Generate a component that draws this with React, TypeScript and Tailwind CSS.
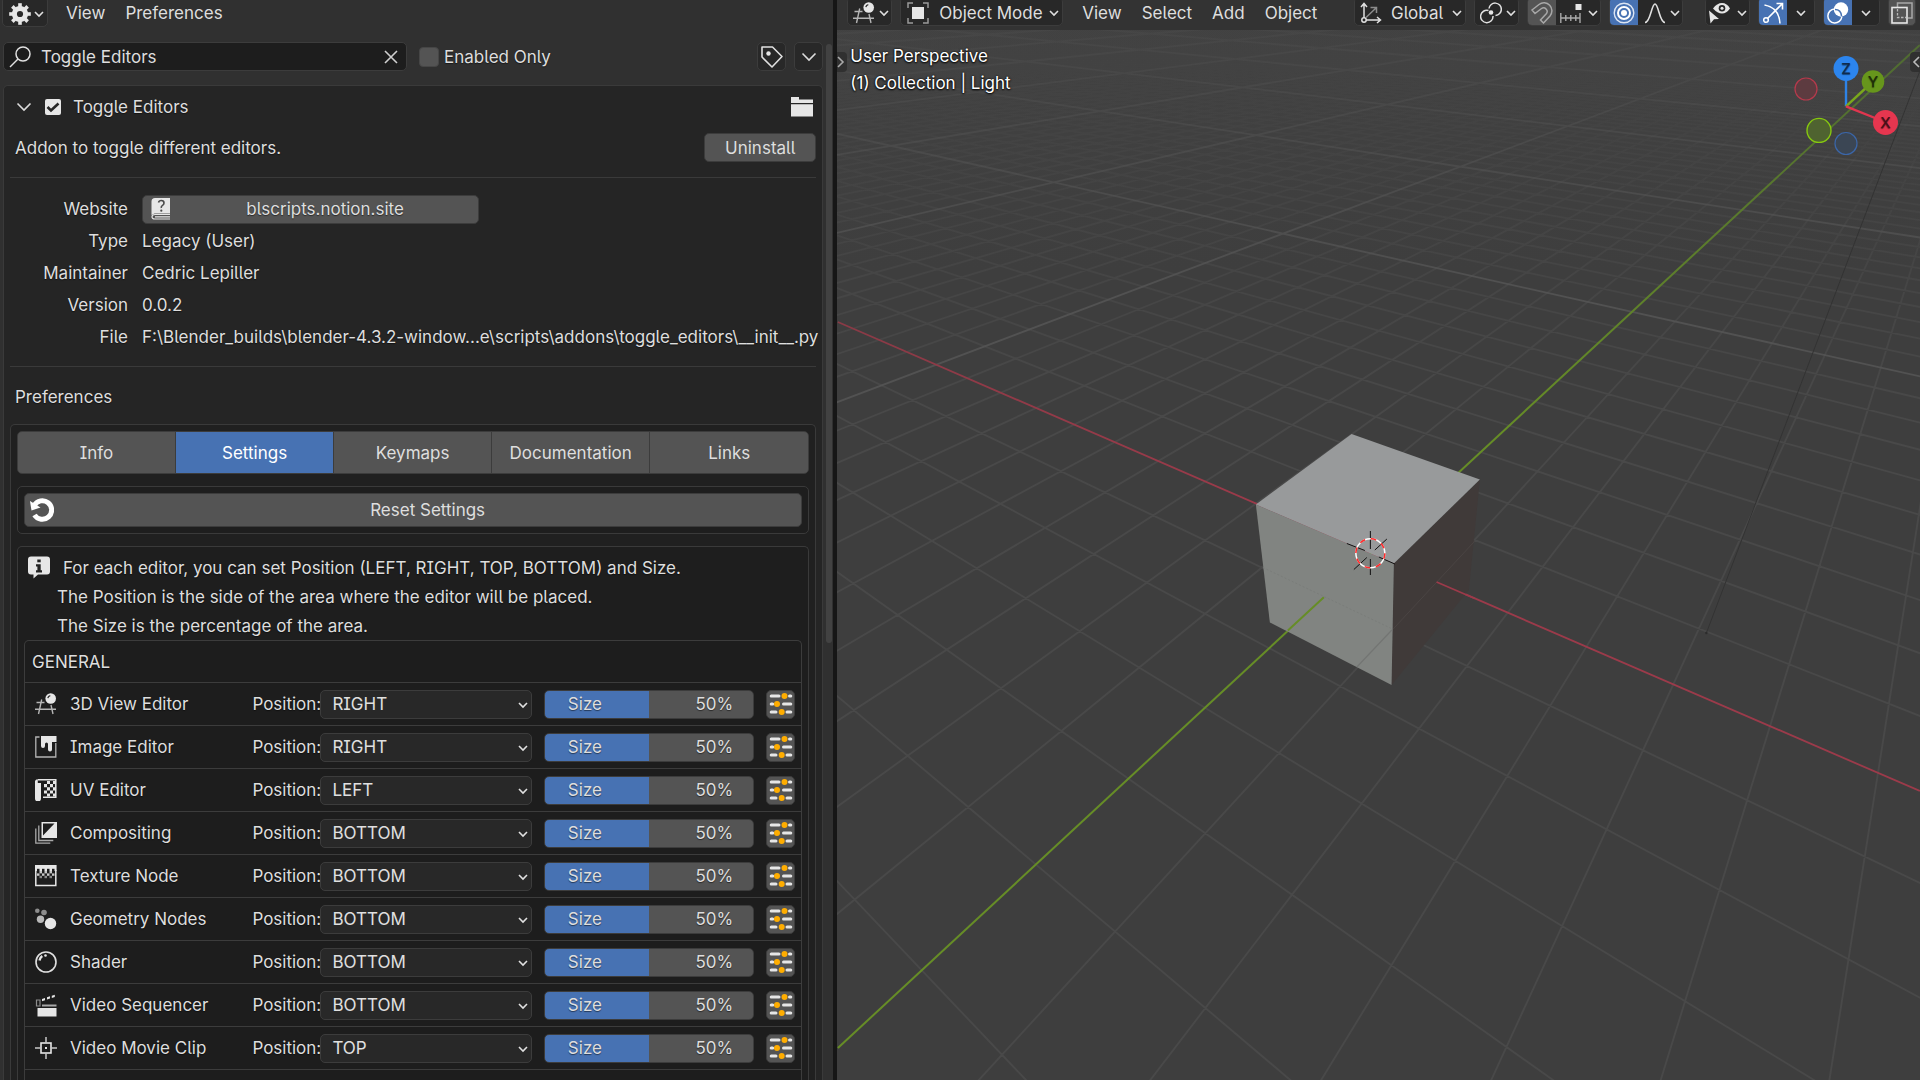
import React, { useState } from "react";

type IconProps = { className?: string };

function Svg({ children, className = "" }: { children: React.ReactNode; className?: string }) {
  return (
    <svg viewBox="0 0 22 22" className={`h-[22px] w-[22px] shrink-0 ${className}`} fill="none" aria-hidden="true">
      {children}
    </svg>
  );
}

function Chevron({ className = "" }: IconProps) {
  return (
    <svg viewBox="0 0 10 8" className={`h-2 w-2.5 shrink-0 ${className}`} fill="none" aria-hidden="true">
      <path d="M1 2l4 4 4-4" stroke="#e0e0e0" strokeWidth="1.6" />
    </svg>
  );
}

function WideChevron() {
  return (
    <svg viewBox="0 0 16 10" className="h-2.5 w-4 shrink-0" fill="none" aria-hidden="true">
      <path d="M1.500 1.500l6.500 6.500 6.500-6.500" stroke="#dcdcdc" strokeWidth="1.600" />
    </svg>
  );
}

function GearIcon() {
  return (
    <Svg>
      <circle cx="11" cy="11" r="5.600" stroke="#e6e6e6" strokeWidth="5" />
      {[0, 45, 90, 135, 180, 225, 270, 315].map((a) => (
        <rect key={a} x="9.200" y="0.200" width="3.600" height="4" fill="#e6e6e6" transform={`rotate(${a} 11 11)`} />
      ))}
    </Svg>
  );
}

function SearchIcon() {
  return (
    <Svg>
      <circle cx="14" cy="8" r="7" stroke="#e0e0e0" strokeWidth="1.500" />
      <path d="M9 13L1 21" stroke="#e0e0e0" strokeWidth="1.500" />
    </Svg>
  );
}

function TagIcon() {
  return (
    <Svg>
      <path d="M1 1h10.500l9.500 9.500L11 21 1 11z" stroke="#e0e0e0" strokeWidth="1.600" strokeLinejoin="round" />
      <circle cx="7.500" cy="7.500" r="2.200" fill="#e6e6e6" />
    </Svg>
  );
}

function FolderIcon() {
  return (
    <Svg>
      <path d="M0 1h8v2.500h14V7H0zM0 8.200h22V20.500H0z" fill="#e6e6e6" />
    </Svg>
  );
}

function BookIcon() {
  return (
    <Svg>
      <path d="M5 0h15v15.500H4.500L1.500 17V3.500Q1.500 0 5 0z" fill="#e6e6e6" />
      <path d="M20 16.500H5q-3 0-3 2.300T5 21h15M5 18.800h15" stroke="#e6e6e6" strokeWidth="1.200" />
      <path d="M8.500 4.500Q9 2.500 11.300 2.500 14 2.500 14 5q0 1.500-1.500 2.400T11.300 10" stroke="#4a4a4a" strokeWidth="1.600" />
      <circle cx="11.300" cy="12.700" r="1.100" fill="#4a4a4a" />
    </Svg>
  );
}

function ResetIcon() {
  return (
    <svg viewBox="0 0 24 24" className="h-6 w-6 shrink-0" fill="none" aria-hidden="true">
      <path d="M4.200 7.500A9.300 9.300 0 1 1 4.500 17" stroke="#fff" strokeWidth="5" />
      <path d="M0 3l1.500 9.500 9-3z" fill="#fff" />
    </svg>
  );
}

function InfoIcon() {
  return (
    <Svg className="h-[23px]">
      <path d="M3 0h16a3 3 0 0 1 3 3v12a3 3 0 0 1-3 3H10l-4.500 4V18H3a3 3 0 0 1-3-3V3a3 3 0 0 1 3-3z" fill="#e6e6e6" />
      <rect x="9.300" y="3" width="3.400" height="2.800" fill="#222" />
      <path d="M8 7.700h4.700v6.100H14V16H8v-2.200h1.400V9.900H8z" fill="#222" />
    </Svg>
  );
}

function View3DIcon() {
  return (
    <Svg>
      <g stroke="#b4b4b4" strokeWidth="1.400">
        <path d="M1.500 9.500h8M0 16.300h21M6.700 6.500L3.500 21M16 12l2 9" />
      </g>
      <circle cx="15.700" cy="5.500" r="5.300" fill="#e6e6e6" />
      <path d="M12.800 5.200q.4-2.200 2.500-2.600" stroke="#333" strokeWidth="1.300" />
    </Svg>
  );
}

function ImageIcon() {
  return (
    <Svg>
      <path d="M4.500 1H.8v20h20V7" stroke="#b4b4b4" strokeWidth="1.300" />
      <path d="M6 0h15.500v6H17v7.500a2 2 0 0 1-4 0V8a1.500 1.500 0 0 0-3 0v2a1.800 1.800 0 0 1-4 0z" fill="#e6e6e6" />
    </Svg>
  );
}

function UvIcon() {
  return (
    <Svg>
      <path d="M3 .8h17.800v17.500H8" stroke="#e6e6e6" strokeWidth="1.500" />
      <path d="M0 3a2.500 2.500 0 0 1 2.800-2.800V4H6v15.500a2.500 2.500 0 0 1-6 0z" fill="#e6e6e6" />
      <path d="M12 2h3v3h-3zM18 2h3v3h-3zM15 5h3v3.200h-3zM9 5h3v3.200H9zM12 8.200h3v3.200h-3zM18 8.200h3v3.200h-3zM15 11.400h3v3.200h-3zM9 11.400h3v3.200H9zM12 14.600h3v3h-3zM18 14.600h3v3h-3z" fill="#e6e6e6" />
    </Svg>
  );
}

function CompositingIcon() {
  return (
    <Svg>
      <path d="M6.500 0H22v16H6.500z" fill="#e6e6e6" />
      <path d="M8 1.500h11.500L8 13.500z" fill="#1d1d1d" />
      <path d="M3.800 3.500v15h14.500M.8 6.500v14.700h14.500" stroke="#a8a8a8" strokeWidth="1.300" />
    </Svg>
  );
}

function TextureIcon() {
  return (
    <Svg>
      <path d="M.8 5v15.500h20V5" stroke="#e6e6e6" strokeWidth="1.500" />
      <path d="M0 0h21.600v6H0z" fill="#e6e6e6" />
      <g fill="#1d1d1d">
        {[2, 7, 12, 17].map((x) => (
          <rect key={x} x={x} y="3.800" width="2.500" height="2.400" />
        ))}
      </g>
      <g fill="#c8c8c8">
        {[4.5, 9.5, 14.5].map((x) => (
          <rect key={x} x={x} y="6" width="2.500" height="2.400" />
        ))}
        {[2, 7, 12, 17].map((x) => (
          <rect key={x} x={x} y="8.400" width="2.500" height="2.400" />
        ))}
        {[4.5, 9.5, 14.5].map((x) => (
          <rect key={x} x={x} y="10.800" width="2.500" height="2.400" fill="#888" />
        ))}
      </g>
    </Svg>
  );
}

function GeometryIcon() {
  return (
    <Svg>
      <circle cx="2.300" cy="2.700" r="2.300" fill="#8c8c8c" />
      <circle cx="9" cy="4.500" r="2.800" fill="#8c8c8c" />
      <circle cx="5.500" cy="11.300" r="3.700" fill="#b8b8b8" />
      <circle cx="15.500" cy="15.500" r="5.700" fill="#e6e6e6" />
    </Svg>
  );
}

function ShaderIcon() {
  return (
    <Svg>
      <circle cx="11" cy="11" r="10" stroke="#e0e0e0" strokeWidth="1.600" />
      <path d="M4.500 9.500Q5 6.500 7.300 5" stroke="#e6e6e6" strokeWidth="2.400" />
      <circle cx="10.500" cy="4.500" r="1.300" fill="#e6e6e6" />
    </Svg>
  );
}

function SequencerIcon() {
  return (
    <Svg className="h-[23px]">
      <path d="M2.500 13.500h19V22h-19z" fill="#e6e6e6" />
      <path d="M7 11h14.500" stroke="#a8a8a8" strokeWidth="2" />
      <path d="M1.500 5.500H5v6H1.500z" stroke="#8c8c8c" strokeWidth="1.200" />
      <path d="M7 4.500l3-1v2.300l-3 1zM12 2.800l3-1V4l-3 1zM16.800 1.200l3-1v2.300l-3 1z" fill="#e6e6e6" />
    </Svg>
  );
}

function ClipIcon() {
  return (
    <Svg>
      <rect x="6" y="6" width="10" height="10" stroke="#e6e6e6" strokeWidth="1.600" />
      <path d="M11 0v6M11 16v6M0 11h6M16 11h6" stroke="#c8c8c8" strokeWidth="1.500" />
      <rect x="10" y="10" width="2" height="2" fill="#e6e6e6" />
    </Svg>
  );
}

function SlidersIcon() {
  return (
    <svg viewBox="0 0 24 22" className="h-[22px] w-6" fill="none" aria-hidden="true">
      <g stroke="#e6e6e6" strokeWidth="3" strokeLinecap="round">
        <path d="M2.200 3H10M20.500 3h1.300M2.200 11h1.500M14.500 11h7.300M2.200 19H7M18 19h3.800" />
      </g>
      <g fill="#ffad00">
        <circle cx="15.500" cy="3" r="3" />
        <circle cx="8" cy="11" r="3" />
        <circle cx="12.700" cy="19" r="3" />
      </g>
    </svg>
  );
}

function ObjectModeIcon() {
  return (
    <Svg>
      <path d="M1 6V1h5M16 1h5v5M21 16v5h-5M6 21H1v-5" stroke="#9a9a9a" strokeWidth="1.500" />
      <rect x="5" y="5" width="12" height="12" fill="#e6e6e6" />
    </Svg>
  );
}

function OrientationIcon() {
  return (
    <Svg>
      <path d="M4 16V2M1 5l3-3.500L7 5M6 18h14M17 15l3.500 3-3.500 3" stroke="#e0e0e0" strokeWidth="1.500" />
      <circle cx="4" cy="18" r="2.200" stroke="#e0e0e0" strokeWidth="1.500" />
      <path d="M6 15.500L16 6M10.500 5.500H16.500V11" stroke="#8c8c8c" strokeWidth="1.500" />
    </Svg>
  );
}

function PivotIcon() {
  return (
    <Svg>
      <path d="M9 6.500A6.200 6.200 0 1 1 15.500 13.500M8.500 8.500A6.200 6.200 0 1 0 13 14" stroke="#e0e0e0" strokeWidth="1.500" />
      <circle cx="11" cy="10.500" r="2.300" fill="#e6e6e6" />
    </Svg>
  );
}

function MagnetIcon() {
  return (
    <Svg>
      <path d="M1 8l7-5.500a8 8 0 0 1 11 11.500L12.500 21l-3-3 6-6.500a3.600 3.600 0 0 0-5-5L4 11.500z" stroke="#a8a8a8" strokeWidth="1.500" />
    </Svg>
  );
}

function IncrementIcon() {
  return (
    <Svg>
      <path d="M.8 11v10M5.800 13v6M10.800 13v6M15.800 13v6M20 11v10M.8 16H20" stroke="#a8a8a8" strokeWidth="1.400" />
      <rect x="15.500" y="2" width="6" height="6" fill="#e6e6e6" />
    </Svg>
  );
}

function ProportionalIcon() {
  return (
    <Svg>
      <circle cx="11" cy="11" r="3" fill="#fff" />
      <circle cx="11" cy="11" r="6" stroke="#fff" strokeWidth="2" />
      <circle cx="11" cy="11" r="9.800" stroke="#dbe4f2" strokeWidth="1.400" />
    </Svg>
  );
}

function FalloffIcon() {
  return (
    <Svg>
      <path d="M1 20.500C6.500 20.500 7.500 2 11 2s4.500 18.500 10 18.500" stroke="#e0e0e0" strokeWidth="1.600" />
    </Svg>
  );
}

function VisibilityIcon() {
  return (
    <Svg>
      <path d="M5 6.500Q9 1 14 1t8 5.500Q18.500 11.500 14 11.500T5 6.500z" fill="#e6e6e6" />
      <circle cx="14" cy="6.300" r="3.300" fill="#282828" />
      <circle cx="14" cy="6.300" r="1.500" fill="#e6e6e6" />
      <path d="M1 8.500l10 8.500-5 .3L2.500 21.500z" fill="#e6e6e6" />
    </Svg>
  );
}

function GizmoIcon() {
  return (
    <Svg>
      <path d="M2.500 3Q17 5.500 18 21.500M5.500 16.500L20 2M14.500 1.500H20.500V7.500" stroke="#fff" strokeWidth="1.600" />
      <circle cx="4" cy="18" r="2.300" stroke="#fff" strokeWidth="1.500" />
    </Svg>
  );
}

function OverlayIcon() {
  return (
    <Svg>
      <circle cx="14" cy="7.500" r="7.200" fill="#fff" />
      <path d="M7.500 7A7 7 0 1 0 14.800 15" stroke="#fff" strokeWidth="1.500" />
      <path d="M8 7.500Q14 7.500 14.500 14" stroke="#4772b3" strokeWidth="1.500" />
    </Svg>
  );
}

function XrayIcon() {
  return (
    <Svg>
      <path d="M6.500 5V1H21v15h-4" stroke="#a8a8a8" strokeWidth="1.500" />
      <rect x="1" y="5.500" width="15" height="15.500" stroke="#e6e6e6" strokeWidth="1.600" />
      <path d="M6.500 7v8.500H15" stroke="#b8b8b8" strokeWidth="1.300" strokeDasharray="2.500 1.500" />
    </Svg>
  );
}

type Editor = { name: string; position: string; icon: () => React.ReactElement };

const EDITORS: Editor[] = [
  { name: "3D View Editor", position: "RIGHT", icon: View3DIcon },
  { name: "Image Editor", position: "RIGHT", icon: ImageIcon },
  { name: "UV Editor", position: "LEFT", icon: UvIcon },
  { name: "Compositing", position: "BOTTOM", icon: CompositingIcon },
  { name: "Texture Node", position: "BOTTOM", icon: TextureIcon },
  { name: "Geometry Nodes", position: "BOTTOM", icon: GeometryIcon },
  { name: "Shader", position: "BOTTOM", icon: ShaderIcon },
  { name: "Video Sequencer", position: "BOTTOM", icon: SequencerIcon },
  { name: "Video Movie Clip", position: "TOP", icon: ClipIcon },
];

function EditorRow({ editor }: { editor: Editor }) {
  const Icon = editor.icon;
  const id = editor.name.toLowerCase().replace(/ /g, "-");
  const [size, setSize] = useState(50);
  return (
    <div className="grid h-[43px] grid-cols-[217fr_279fr_222fr_41px] items-center border-t border-[#3c3c3c] pr-1.5 pl-2.5">
      <div className="flex items-center gap-[13px]">
        <Icon />
        <span>{editor.name}</span>
      </div>
      <div className="flex items-center">
        <label htmlFor={`${id}-pos`} className="w-[68px] shrink-0">
          Position:
        </label>
        <div className="relative flex-1">
          <select
            id={`${id}-pos`}
            defaultValue={editor.position}
            className="block h-[29px] w-full appearance-none rounded-[5px] border border-[#3c3c3c] bg-[#282828] pl-[11px] text-[#e0e0e0]"
          >
            {["LEFT", "RIGHT", "TOP", "BOTTOM"].map((p) => (
              <option key={p}>{p}</option>
            ))}
          </select>
          <Chevron className="pointer-events-none absolute top-[11px] right-1" />
        </div>
      </div>
      <div className="relative ml-3">
        <input
          id={`${id}-size`}
          type="range"
          value={size}
          onChange={(e) => setSize(Number(e.target.value))}
          style={{ backgroundImage: `linear-gradient(to right, #4772b3 ${size}%, #545454 ${size}%)` }}
          className="block h-[29px] w-full appearance-none rounded-[5px] border border-[#3c3c3c] [&::-webkit-slider-thumb]:h-0 [&::-webkit-slider-thumb]:w-0 [&::-webkit-slider-thumb]:appearance-none"
        />
        <div className="pointer-events-none absolute inset-0 flex items-center justify-between pr-[21px] pl-6">
          <label htmlFor={`${id}-size`}>Size</label>
          <span>{size}%</span>
        </div>
      </div>
      <button
        aria-label={`${editor.name} options`}
        className="ml-3 flex h-[29px] w-[29px] items-center justify-center rounded-[5px] border border-[#3c3c3c] bg-[#545454]"
      >
        <SlidersIcon />
      </button>
    </div>
  );
}

const TABS = ["Info", "Settings", "Keymaps", "Documentation", "Links"];

function Tabs() {
  const [active, setActive] = useState("Settings");
  return (
    <div role="tablist" className="grid h-[43px] grid-cols-5 overflow-hidden rounded-[5px] border border-[#3c3c3c] bg-[#3c3c3c]">
      {TABS.map((t) => (
        <button
          key={t}
          role="tab"
          aria-selected={t === active}
          onClick={() => setActive(t)}
          className={
            t === active
              ? "border-r border-[#3c3c3c] bg-[#4772b3] text-white last:border-r-0"
              : "border-r border-[#3c3c3c] bg-[#545454] last:border-r-0"
          }
        >
          {t}
        </button>
      ))}
    </div>
  );
}

function Fact({ label, children }: { label: string; children: React.ReactNode }) {
  return (
    <div className="flex h-8 items-center gap-3.5">
      <dt className="w-[118px] shrink-0 text-right">{label}</dt>
      <dd className="min-w-0 flex-1 whitespace-nowrap">{children}</dd>
    </div>
  );
}

function PreferencesEditor() {
  return (
    <section className="flex w-[43.4%] shrink-0 flex-col overflow-hidden bg-[#303030]">
      <header className="flex h-[42px] shrink-0 items-start">
        <div className="-mt-1 flex h-[31px] items-center">
          <button
            aria-label="Editor type"
            className="ml-0.5 flex h-[31px] w-[46px] items-center gap-[3px] rounded-[5px] border border-[#3c3c3c] bg-[#282828] pt-1 pl-1.5"
          >
            <GearIcon />
            <Chevron />
          </button>
          <button className="mt-0.5 ml-[18px]">View</button>
          <button className="mt-0.5 ml-5">Preferences</button>
        </div>
      </header>
      <div className="flex min-h-0 flex-1">
        <div className="flex min-w-0 flex-1 flex-col pl-[3px]">
          <div className="flex h-[29px] shrink-0 items-center">
            <div className="flex h-[29px] w-[404px] items-center rounded-[5px] border border-[#3c3c3c] bg-[#1d1d1d] pr-2 pl-[5px]">
              <SearchIcon />
              <input
                aria-label="Search add-ons"
                defaultValue="Toggle Editors"
                className="ml-2.5 min-w-0 flex-1 bg-transparent outline-none"
              />
              <button aria-label="Clear search">
                <svg viewBox="0 0 14 14" className="h-3.5 w-3.5" fill="none" aria-hidden="true">
                  <path d="M1 1l12 12M13 1L1 13" stroke="#cfcfcf" strokeWidth="1.600" />
                </svg>
              </button>
            </div>
            <label className="ml-3 flex items-center gap-[5px]">
              <input type="checkbox" className="h-5 w-5 appearance-none rounded-[4px] border border-[#464646] bg-[#545454]" />
              Enabled Only
            </label>
            <button
              aria-label="Filter by tag"
              className="ml-auto flex h-[29px] w-[29px] items-center justify-center rounded-[5px] border border-[#3c3c3c] bg-[#282828]"
            >
              <TagIcon />
            </button>
            <button
              aria-label="Add-on options"
              className="ml-2 flex h-[29px] w-[29px] items-center justify-center rounded-[5px] border border-[#3c3c3c] bg-[#282828]"
            >
              <WideChevron />
            </button>
          </div>

          <div className="mt-3.5 shrink-0 rounded-t-[5px] border border-b-0 border-[#3a3a3a] bg-[#252525] px-1.5">
            <div className="flex h-[41px] items-center pr-[3px] pl-1.5">
              <button aria-label="Collapse">
                <WideChevron />
              </button>
              <label className="ml-[13px] flex items-center gap-3">
                <span className="relative flex">
                  <input type="checkbox" defaultChecked className="h-4 w-4 appearance-none rounded-[2px] bg-[#e6e6e6]" />
                  <svg viewBox="0 0 16 16" className="pointer-events-none absolute inset-0 h-4 w-4" fill="none" aria-hidden="true">
                    <path d="M2.500 8l3.500 3.500L13.500 4.500" stroke="#252525" strokeWidth="2.600" />
                  </svg>
                </span>
                Toggle Editors
              </label>
              <button aria-label="Open folder" className="ml-auto">
                <FolderIcon />
              </button>
            </div>
            <div className="mt-1.5 flex h-[29px] items-center justify-between pl-[5px]">
              <p>Addon to toggle different editors.</p>
              <button className="h-[29px] w-28 rounded-[5px] border border-[#3c3c3c] bg-[#545454]">
                Uninstall
              </button>
            </div>
            <hr className="mt-[15px] border-[#3a3a3a]" />
            <dl className="mt-[15px]">
              <Fact label="Website">
                <a
                  href="https://blscripts.notion.site"
                  className="flex h-[29px] w-1/2 items-center rounded-[5px] border border-[#3c3c3c] bg-[#545454] pl-[7px]"
                >
                  <BookIcon />
                  <span className="flex-1 text-center">blscripts.notion.site</span>
                </a>
              </Fact>
              <Fact label="Type">Legacy (User)</Fact>
              <Fact label="Maintainer">Cedric Lepiller</Fact>
              <Fact label="Version">0.0.2</Fact>
              <Fact label="File">F:\Blender_builds\blender-4.3.2-window...e\scripts\addons\toggle_editors\__init__.py</Fact>
            </dl>
            <hr className="mt-[13px] border-[#3a3a3a]" />
            <h2 className="mt-4 flex h-7 items-center pl-[5px]">Preferences</h2>

            <div className="mt-[13px] rounded-t-[5px] border border-b-0 border-[#3a3a3a] bg-[#202020] px-1.5 pt-1.5">
              <Tabs />
              <div className="mt-3 rounded-[5px] border border-[#3a3a3a] bg-[#1e1e1e] p-1.5">
                <button className="flex h-[34px] w-full items-center rounded-[5px] border border-[#3c3c3c] bg-[#545454] pl-[5px]">
                  <ResetIcon />
                  <span className="flex-1 text-center">Reset Settings</span>
                </button>
              </div>
              <div className="mt-3 rounded-t-[5px] border border-b-0 border-[#3a3a3a] bg-[#1e1e1e] px-1.5 pt-1.5">
                <div className="flex h-[29px] items-center gap-[13px] pl-1">
                  <InfoIcon />
                  <p>For each editor, you can set Position (LEFT, RIGHT, TOP, BOTTOM) and Size.</p>
                </div>
                <p className="flex h-[29px] items-center pl-[33px]">
                  The Position is the side of the area where the editor will be placed.
                </p>
                <p className="flex h-[29px] items-center pl-[33px]">The Size is the percentage of the area.</p>
                <div className="rounded-t-[5px] border border-b-0 border-[#3c3c3c] bg-[#1d1d1d]">
                  <h3 className="flex h-[41px] items-center pl-[7px]">GENERAL</h3>
                  {EDITORS.map((e) => (
                    <EditorRow key={e.name} editor={e} />
                  ))}
                  <div className="h-10 border-t border-[#3c3c3c]" />
                </div>
              </div>
            </div>
          </div>
        </div>
        <div className="ml-[3px] w-1.5 shrink-0 pt-0.5">
          <div className="h-[599px] rounded-full bg-[#424242]" />
        </div>
        <div className="w-px shrink-0" />
      </div>
    </section>
  );
}

/* Ground plane projection: world (x, y, 0) to canvas pixels. */
const CX = 1371;
const CY = 553.4;
const depth = (x: number, y: number) => 1 - 0.0435 * x + 0.0689 * y;
function project(x: number, y: number) {
  const w = depth(x, y);
  return `${(CX + (62.46 * x + 43.8 * y) / w).toFixed(1)} ${(CY + (27.05 * x - 40.87 * y) / w).toFixed(1)}`;
}
const NEAR = 0.1;
const lineX = (x: number) => `M${project(x, (NEAR - 1 + 0.0435 * x) / 0.0689)}L${project(x, 150)}`;
const lineY = (y: number) => `M${project(-150, y)}L${project((1 + 0.0689 * y - NEAR) / 0.0435, y)}`;
const range = (from: number, to: number) => Array.from({ length: to - from + 1 }, (_, i) => from + i);
const minorPath = [
  ...range(-95, 22).filter((n) => n % 10 !== 0).map(lineX),
  ...range(-13, 95).filter((n) => n % 10 !== 0).map(lineY),
].join("");
const majorPath = [
  ...range(-12, 4).filter((n) => n !== 0).map((n) => lineX(n * 10)),
  ...range(-1, 12).filter((n) => n !== 0).map((n) => lineY(n * 10)),
].join("");

function Scene() {
  return (
    <svg
      viewBox="837 0 1083 1080"
      preserveAspectRatio="xMidYMid slice"
      className="absolute inset-0 h-full w-full"
      fill="none"
      role="img"
      aria-label="3D scene with a cube on a grid"
    >
      <defs>
        <linearGradient id="minor" gradientUnits="userSpaceOnUse" x1="0" y1="30" x2="0" y2="420">
          <stop offset="0" stopColor="#4a4a4a" stopOpacity="0.05" />
          <stop offset="0.3" stopColor="#4a4a4a" stopOpacity="0.35" />
          <stop offset="1" stopColor="#4a4a4a" stopOpacity="0.9" />
        </linearGradient>
        <linearGradient id="major" gradientUnits="userSpaceOnUse" x1="0" y1="30" x2="0" y2="300">
          <stop offset="0" stopColor="#505050" stopOpacity="0.3" />
          <stop offset="1" stopColor="#545454" stopOpacity="0.9" />
        </linearGradient>
        <linearGradient id="green" gradientUnits="userSpaceOnUse" x1="1920" y1="45" x2="1500" y2="430">
          <stop offset="0" stopColor="#506b32" />
          <stop offset="1" stopColor="#668d26" />
        </linearGradient>
        <linearGradient id="red" gradientUnits="userSpaceOnUse" x1="838" y1="322" x2="1256" y2="505">
          <stop offset="0" stopColor="#8a3a46" />
          <stop offset="1" stopColor="#9c3a4a" />
        </linearGradient>
        <linearGradient id="ground" x1="0" y1="0" x2="0" y2="1">
          <stop offset="0" stopColor="#424242" />
          <stop offset="0.25" stopColor="#3e3e3e" />
          <stop offset="1" stopColor="#3e3e3e" />
        </linearGradient>
      </defs>
      <rect x="0" y="-500" width="2800" height="2200" fill="#3e3e3e" />
      <rect x="837" y="0" width="1083" height="1080" fill="url(#ground)" />
      <path d={minorPath} stroke="url(#minor)" strokeWidth="1.800" />
      <path d={majorPath} stroke="url(#major)" strokeWidth="1.800" />
      <path d="M838 322L1371 553.400 1920 791" stroke="url(#red)" strokeWidth="1.800" />
      <path d="M838 1048L1920 45" stroke="url(#green)" strokeWidth="2" />
      <path d="M1706.500 633L1920 71" stroke="#333" strokeWidth="1" />
      <circle cx="1706.500" cy="633" r="1.200" fill="#2c2c2c" />

      <path d="M1480 479.500L1394 563.500 1391.700 685 1469 590z" fill="#403a39" />
      <path d="M1256 504.500L1394 563.500 1391.700 685 1270 622.500z" fill="#818481" />
      <path d="M1351.700 434L1480 479.500 1394 563.500 1256 504.500z" fill="#989a9b" />
      <path d="M1263 567.500L1392.500 629" stroke="#7a7d7a" strokeWidth="1" strokeDasharray="2 2" />
      <path d="M1393.300 629L1475 541" stroke="#4a4443" strokeWidth="1" />
      <path d="M1392 630L1357 667" stroke="#737573" strokeWidth="1.200" />
      <path d="M1324 597.300L1288 630.500" stroke="#668d26" strokeWidth="2" />
      <path d="M1436.700 582L1475 598.500" stroke="#9c3a4a" strokeWidth="1.800" />

      <g stroke="#111" strokeWidth="1">
        <path d="M1370.500 531v18M1370.500 559v16M1347 543.500l18 7M1379 557l16 7M1387 539l-12 11M1354 569.500l13-12" />
      </g>
      <circle cx="1370.500" cy="553.300" r="14.500" stroke="#fff" strokeWidth="1.500" />
      <circle cx="1370.500" cy="553.300" r="14.500" stroke="#ff2a2a" strokeWidth="1.500" strokeDasharray="5.690" />
    </svg>
  );
}

function NavigationGizmo() {
  return (
    <svg viewBox="1790 50 115 112" className="absolute top-[50px] right-[15px] h-28 w-[115px]" fill="none" role="img" aria-label="Navigation gizmo">
      <circle cx="1806" cy="89" r="11" fill="#5d3b40" stroke="#b63a4c" strokeWidth="1.200" />
      <circle cx="1846" cy="143.500" r="11" fill="#3b4654" stroke="#3b66a8" strokeWidth="1.200" />
      <path d="M1846 106.300V76" stroke="#2e83e6" strokeWidth="2.400" />
      <path d="M1846 106.300L1868 86" stroke="#7aa81c" strokeWidth="2.400" />
      <path d="M1846 106.300L1880 120" stroke="#e0364f" strokeWidth="2.400" />
      <circle cx="1819" cy="130.400" r="12" fill="#4f6330" stroke="#86c810" strokeWidth="1.400" />
      <circle cx="1873" cy="81.500" r="11.300" fill="#67961c" />
      <circle cx="1846" cy="68.500" r="12.500" fill="#2c85ee" />
      <circle cx="1885.500" cy="122.500" r="12.500" fill="#e6364f" />
      <g fontFamily="Inter, sans-serif" fontSize="15" fontWeight="500" textAnchor="middle">
        <text x="1846" y="74" fill="#0e2b4e">Z</text>
        <text x="1873" y="87" fill="#1f2e08">Y</text>
        <text x="1885.500" y="128" fill="#4a0f18">X</text>
      </g>
    </svg>
  );
}

function ViewportHeader() {
  const box = "flex h-[29px] shrink-0 items-center overflow-hidden rounded-[5px] border border-[#3c3c3c] bg-[#282828]";
  return (
    <header className="relative flex h-[30px] w-full items-end justify-between overflow-hidden bg-[#333] pr-1 pb-1 pl-2.5 whitespace-nowrap">
      <div className="flex items-center">
        <button aria-label="Editor type" className={`${box} w-[45px] gap-1 pt-0.5 pl-[5px]`}>
          <View3DIcon />
          <Chevron />
        </button>
        <button className={`${box} ml-2 w-[163px] pt-0.5 pr-[3px] pl-1.5`}>
          <ObjectModeIcon />
          <span className="ml-2.5 flex-1 text-left">Object Mode</span>
          <Chevron />
        </button>
        <nav className="ml-[19px] flex gap-5 pt-0.5">
          <button>View</button>
          <button>Select</button>
          <button>Add</button>
          <button>Object</button>
        </nav>
      </div>
      <div className="flex items-center">
        <button className={`${box} w-28 pt-0.5 pr-[3px] pl-[5px]`}>
          <OrientationIcon />
          <span className="ml-[9px] flex-1 text-left">Global</span>
          <Chevron />
        </button>
        <button aria-label="Pivot point" className={`${box} ml-2 w-[45px] gap-1 pt-0.5 pl-[5px]`}>
          <PivotIcon />
          <Chevron />
        </button>
        <div className={`${box} ml-2 w-[74px]`}>
          <button aria-label="Snap" className="flex h-full w-7 items-center justify-center bg-[#545454] pt-0.5">
            <MagnetIcon />
          </button>
          <button aria-label="Snap options" className="flex flex-1 items-center gap-1.5 pt-0.5 pl-1">
            <IncrementIcon />
            <Chevron />
          </button>
        </div>
        <div className={`${box} ml-2 w-[74px]`}>
          <button aria-label="Proportional editing" className="flex h-full w-7 items-center justify-center bg-[#4772b3] pt-0.5">
            <ProportionalIcon />
          </button>
          <button aria-label="Falloff" className="flex flex-1 items-center gap-1 pt-0.5 pl-1.5">
            <FalloffIcon />
            <Chevron />
          </button>
        </div>
        <button aria-label="Visibility" className={`${box} ml-[22px] w-[45px] gap-[7px] pt-0.5 pl-0.5`}>
          <VisibilityIcon />
          <Chevron />
        </button>
        <div className={`${box} ml-2 w-[57px]`}>
          <button aria-label="Show gizmos" className="flex h-full w-7 items-center justify-center bg-[#4772b3] pt-0.5">
            <GizmoIcon />
          </button>
          <button aria-label="Gizmo options" className="flex flex-1 justify-center pt-0.5">
            <Chevron />
          </button>
        </div>
        <div className={`${box} ml-2 w-[57px]`}>
          <button aria-label="Show overlays" className="flex h-full w-7 items-center justify-center bg-[#4772b3] pt-0.5">
            <OverlayIcon />
          </button>
          <button aria-label="Overlay options" className="flex flex-1 justify-center pt-0.5">
            <Chevron />
          </button>
        </div>
        <button
          aria-label="X-ray"
          className="ml-2 flex h-[29px] w-7 items-center justify-center rounded-[5px] border border-[#3c3c3c] bg-[#545454] pt-0.5"
        >
          <XrayIcon />
        </button>
      </div>
    </header>
  );
}

function Viewport() {
  return (
    <section className="relative min-w-0 flex-1 overflow-hidden bg-[#3e3e3e]">
      <Scene />
      <ViewportHeader />
      <div className="relative pt-[13px] pl-[13px] leading-[27px] text-white text-shadow-[0_0_2px_#000,0_1px_2px_#000]">
        <p>User Perspective</p>
        <p>(1) Collection | Light</p>
      </div>
      <button aria-label="Show toolbar" className="absolute top-[52px] left-0 flex h-5 w-2.5 items-center rounded-r-[4px] bg-[#303030]">
        <svg viewBox="0 0 8 14" className="h-3.5 w-2" fill="none" aria-hidden="true">
          <path d="M1 2l5 5-5 5" stroke="#aaa" strokeWidth="1.600" />
        </svg>
      </button>
      <button aria-label="Show sidebar" className="absolute top-[52px] right-0 flex h-5 w-2.5 items-center justify-end rounded-l-[4px] bg-[#303030]">
        <svg viewBox="0 0 8 14" className="h-3.5 w-2" fill="none" aria-hidden="true">
          <path d="M7 2L2 7l5 5" stroke="#bbb" strokeWidth="1.600" />
        </svg>
      </button>
      <NavigationGizmo />
    </section>
  );
}

export default function App() {
  return (
    <main className="flex h-screen overflow-hidden bg-[#161616] font-[Inter,sans-serif] text-[17px] leading-6 text-[#dedede] [font-feature-settings:'cv05','cv08'] text-shadow-[0_1px_1px_rgb(0_0_0/0.5)]">
      <PreferencesEditor />
      <div className="w-1 shrink-0" />
      <Viewport />
    </main>
  );
}
